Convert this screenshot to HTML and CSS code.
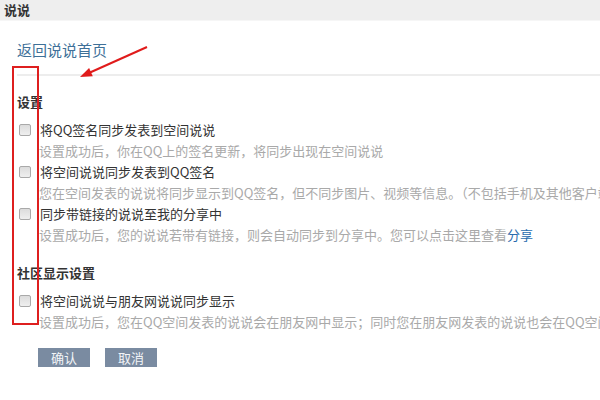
FILE: index.html
```html
<!DOCTYPE html>
<html lang="zh-CN">
<head>
<meta charset="utf-8">
<title>说说</title>
<link rel="stylesheet" href="styles.css">
</head>
<body>
<div class="topbar">说说</div>
<div class="main">
  <div class="back"><a href="#">返回说说首页</a></div>
  <div class="sep"></div>
  <h3 class="heading">设置</h3>
  <div class="item">
    <div class="row"><span class="cb"></span><span>将QQ签名同步发表到空间说说</span></div>
    <div class="desc">设置成功后，你在QQ上的签名更新，将同步出现在空间说说</div>
  </div>
  <div class="item">
    <div class="row"><span class="cb"></span><span>将空间说说同步发表到QQ签名</span></div>
    <div class="desc">您在空间发表的说说将同步显示到QQ签名，但不同步图片、视频等信息。（不包括手机及其他客户端发表的说说）</div>
  </div>
  <div class="item">
    <div class="row"><span class="cb"></span><span>同步带链接的说说至我的分享中</span></div>
    <div class="desc">设置成功后，您的说说若带有链接，则会自动同步到分享中。您可以点击这里查看<a href="#">分享</a></div>
  </div>
  <h3 class="heading heading2">社区显示设置</h3>
  <div class="item">
    <div class="row"><span class="cb"></span><span>将空间说说与朋友网说说同步显示</span></div>
    <div class="desc">设置成功后，您在QQ空间发表的说说会在朋友网中显示；同时您在朋友网发表的说说也会在QQ空间中显示</div>
  </div>
  <div class="buttons">
    <button class="btn">确认</button>
    <button class="btn">取消</button>
  </div>
</div>
<div class="mark-box"></div>
<svg class="mark-arrow" width="600" height="400" viewBox="0 0 600 400">
  <line x1="147" y1="47" x2="90" y2="72.5" stroke="#e01b1b" stroke-width="2"/>
  <polygon points="80,77 92.8,76.2 89.1,68" fill="#e01b1b"/>
</svg>
</body>
</html>
```
FILE: styles.css
```css
html, body {
  margin: 0;
  padding: 0;
  background: #ffffff;
  width: 600px;
  height: 400px;
  overflow: hidden;
}
body {
  font-family: "Noto Sans CJK SC", "Noto Sans", sans-serif;
  font-size: 13px;
  color: #333333;
  position: relative;
}
.topbar {
  height: 20px;
  line-height: 20px;
  padding-left: 4px;
  background: #eeeeee;
  border-bottom: 1px solid #f6f6f6;
  font-weight: bold;
  color: #333333;
}
.main {
  padding-left: 17px;
  white-space: nowrap;
}
.back {
  padding-top: 19px;
  line-height: 20px;
  font-size: 15px;
}
.back a {
  color: #3e7098;
  text-decoration: none;
}
.sep {
  margin-top: 14px;
  height: 2px;
  background: #ededed;
}
.heading {
  margin: 16px 0 7px 0;
  line-height: 20px;
  font-size: 13px;
  font-weight: bold;
  color: #333333;
}
.heading2 {
  margin-top: 18px;
}
.item {
  line-height: 21px;
}
.row {
  display: flex;
  align-items: center;
  height: 21px;
}
.cb {
  box-sizing: border-box;
  width: 12px;
  height: 12px;
  margin: 0 9px 0 2px;
  border: 1px solid #a9a9a9;
  border-radius: 2px;
  background: linear-gradient(#dcdcdc, #efefef);
  flex: none;
}
.desc {
  padding-left: 22px;
  color: #a9a9a9;
  height: 21px;
}
.desc a {
  color: #2b6cae;
  text-decoration: none;
}
.buttons {
  display: flex;
  gap: 15px;
  margin: 16px 0 0 21px;
}
.btn {
  width: 52px;
  height: 19px;
  padding: 0;
  border: none;
  background: #7a8ba1;
  color: #f2f4f7;
  font-family: "Noto Sans CJK SC", "Noto Sans", sans-serif;
  font-size: 13px;
  line-height: 19px;
}
.mark-box {
  position: absolute;
  left: 12px;
  top: 66px;
  width: 23px;
  height: 255px;
  border: 2px solid #de1f1f;
}
.mark-arrow {
  position: absolute;
  left: 0;
  top: 0;
  pointer-events: none;
}
```
